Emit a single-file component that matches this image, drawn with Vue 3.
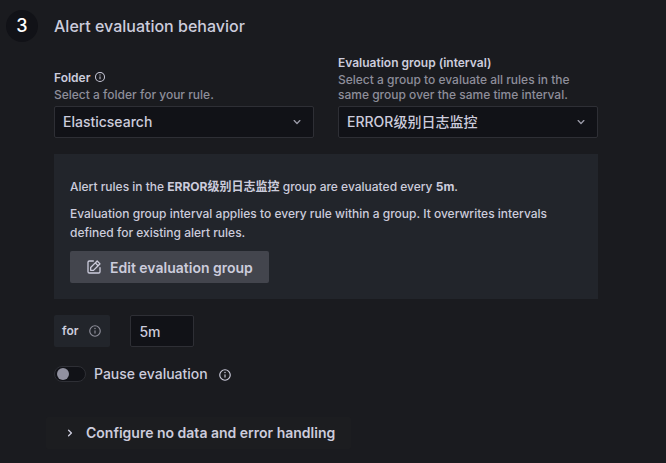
<script setup>
import { ref } from 'vue'

const folder = ref('Elasticsearch')
const group = ref('ERROR级别日志监控')
const duration = ref('5m')
const paused = ref(false)

const infoPath = 'M12,2A10,10,0,1,0,22,12,10,10,0,0,0,12,2Zm0,18a8,8,0,1,1,8-8A8,8,0,0,1,12,20Zm0-9.500a1,1,0,0,0-1,1v4a1,1,0,0,0,2,0v-4A1,1,0,0,0,12,10.500Zm0-4a1.250,1.250,0,1,0,1.250,1.250A1.250,1.250,0,0,0,12,6.500Z'
const downPath = 'M17,9.170a1,1,0,0,0-1.410,0L12,12.710,8.460,9.170a1,1,0,0,0-1.410,0,1,1,0,0,0,0,1.420l4.240,4.240a1,1,0,0,0,1.420,0L17,10.590A1,1,0,0,0,17,9.170Z'
</script>

<template>
  <section class="step">
    <div class="step-number">3</div>
    <div class="content">
      <h2>Alert evaluation behavior</h2>

      <div class="fields">
        <div class="field">
          <div class="label-row">
            <label for="folder">Folder</label>
            <svg class="info small" viewBox="0 0 24 24" aria-hidden="true"><path :d="infoPath" /></svg>
          </div>
          <p class="hint">Select a folder for your rule.</p>
          <div class="select">
            <select id="folder" v-model="folder">
              <option>Elasticsearch</option>
            </select>
            <svg class="chevron" viewBox="0 0 24 24" aria-hidden="true"><path :d="downPath" /></svg>
          </div>
        </div>
        <div class="field">
          <div class="label-row">
            <label for="group">Evaluation group (interval)</label>
          </div>
          <p class="hint">Select a group to evaluate all rules in the same group over the same time interval.</p>
          <div class="select">
            <select id="group" v-model="group">
              <option>ERROR级别日志监控</option>
            </select>
            <svg class="chevron" viewBox="0 0 24 24" aria-hidden="true"><path :d="downPath" /></svg>
          </div>
        </div>
      </div>

      <div class="card">
        <p>Alert rules in the <strong>{{ group }}</strong> group are evaluated every <strong>5m</strong>.</p>
        <p>Evaluation group interval applies to every rule within a group. It overwrites intervals defined for existing alert rules.</p>
        <button type="button" class="edit">
          <svg class="icon" viewBox="0 0 24 24" aria-hidden="true">
            <path d="M21,12a1,1,0,0,0-1,1v6a1,1,0,0,1-1,1H5a1,1,0,0,1-1-1V5A1,1,0,0,1,5,4h6a1,1,0,0,0,0-2H5A3,3,0,0,0,2,5V19a3,3,0,0,0,3,3H19a3,3,0,0,0,3-3V13A1,1,0,0,0,21,12ZM6,12.760V17a1,1,0,0,0,1,1h4.240a1,1,0,0,0,.710-.290l6.920-6.930h0L21.710,8a1,1,0,0,0,0-1.420L17.470,2.290a1,1,0,0,0-1.420,0L13.230,5.120h0L6.290,12.050A1,1,0,0,0,6,12.760ZM16.760,4.410l2.830,2.830L18.170,8.660,15.340,5.830ZM8,13.170l5.930-5.930,2.830,2.830L10.830,16H8Z" />
          </svg>
          Edit evaluation group
        </button>
      </div>

      <div class="duration">
        <div class="duration-label">
          <label for="duration">for</label>
          <svg class="info" viewBox="0 0 24 24" aria-hidden="true"><path :d="infoPath" /></svg>
        </div>
        <input id="duration" v-model="duration" class="text-input" type="text" />
      </div>

      <div class="pause">
        <input id="pause" v-model="paused" class="switch" type="checkbox" role="switch" />
        <label for="pause">Pause evaluation</label>
        <svg class="info bright" viewBox="0 0 24 24" aria-hidden="true"><path :d="infoPath" /></svg>
      </div>

      <button type="button" class="collapse">
        <svg class="icon" viewBox="0 0 24 24" aria-hidden="true">
          <path d="M14.830,11.290,10.590,7.050a1,1,0,0,0-1.420,0,1,1,0,0,0,0,1.410L12.710,12,9.170,15.540a1,1,0,0,0,0,1.410,1,1,0,0,0,.710.290,1,1,0,0,0,.710-.290l4.240-4.240A1,1,0,0,0,14.830,11.290Z" />
        </svg>
        Configure no data and error handling
      </button>
    </div>
  </section>
</template>

<style>
body {
  margin: 0;
  background: #1a1b1f;
}
</style>

<style scoped>
.step {
  display: flex;
  align-items: flex-start;
  gap: 16px;
  padding: 10px 68px 14px 6px;
  color: #ccccdc;
  font-family: Inter, "Noto Sans CJK SC", sans-serif;
  font-size: 14px;
  font-weight: 500;
  line-height: 22px;
}
.step * {
  box-sizing: border-box;
}
.step-number {
  flex: none;
  width: 32px;
  height: 32px;
  border-radius: 50%;
  background: #111217;
  color: #fff;
  font-size: 18px;
  line-height: 32px;
  text-align: center;
}
.content {
  flex: 1;
  min-width: 0;
}
h2 {
  margin: 0 0 13px;
  font-size: 16px;
  font-weight: 500;
  line-height: 32px;
}
p {
  margin: 0;
}
.fields {
  display: grid;
  grid-template-columns: 1fr 1fr;
  align-items: end;
  gap: 24px;
}
.label-row {
  display: flex;
  align-items: flex-start;
  gap: 4px;
  height: 17px;
  font-size: 12px;
  font-weight: 600;
  line-height: 16px;
}
.hint {
  margin-bottom: 4px;
  color: #8e8e9a;
  font-size: 12px;
  line-height: 15px;
}
.info {
  flex: none;
  width: 14px;
  height: 14px;
  fill: #8e8e9a;
}
.info.small {
  width: 12px;
  height: 12px;
  margin-top: 1px;
  fill: #ccccdc;
}
.info.bright {
  margin: 2px 0 0 2px;
  fill: #ccccdc;
}
.select {
  display: grid;
  align-items: center;
}
.select > * {
  grid-area: 1 / 1;
}
select,
.text-input {
  width: 100%;
  height: 32px;
  padding: 0 8px;
  border: 1px solid #2e2f35;
  border-radius: 2px;
  background: #111217;
  color: inherit;
  font: inherit;
  appearance: none;
}
.chevron {
  justify-self: end;
  width: 16px;
  height: 16px;
  margin-right: 9px;
  fill: #9b9ba8;
  pointer-events: none;
}
.card {
  margin: 16px 0;
  padding: 23px 16px 16px;
  background: #22252b;
  font-size: 12px;
  line-height: 19px;
}
.card p {
  margin-bottom: 8px;
}
strong {
  font-weight: 700;
}
.edit,
.collapse {
  display: flex;
  align-items: center;
  gap: 8px;
  height: 32px;
  padding: 0 16px;
  border: 0;
  border-radius: 2px;
  background: #43454d;
  color: #ccccdc;
  font: inherit;
  font-size: 14px;
  font-weight: 600;
}
.card p + .edit {
  margin-top: 9px;
}
.icon {
  width: 16px;
  height: 16px;
  fill: currentColor;
}
.duration {
  display: flex;
  gap: 20px;
}
.duration-label {
  display: flex;
  align-items: center;
  gap: 10px;
  height: 32px;
  padding: 0 8px;
  border-radius: 2px;
  background: #22252b;
  font-size: 12px;
  font-weight: 600;
}
.text-input {
  width: 64px;
}
.pause {
  display: flex;
  align-items: center;
  gap: 8px;
  margin-top: 16px;
}
.switch {
  display: flex;
  align-items: center;
  width: 32px;
  height: 16px;
  margin: 0;
  padding: 0 2px;
  border: 1px solid #2e2f35;
  border-radius: 8px;
  background: #111217;
  appearance: none;
}
.switch::before {
  content: "";
  width: 12px;
  height: 12px;
  border-radius: 50%;
  background: #9191a0;
}
.switch:checked {
  justify-content: flex-end;
}
.collapse {
  margin: 32px 0 0 -8px;
  background: #1c1d20;
}
</style>
